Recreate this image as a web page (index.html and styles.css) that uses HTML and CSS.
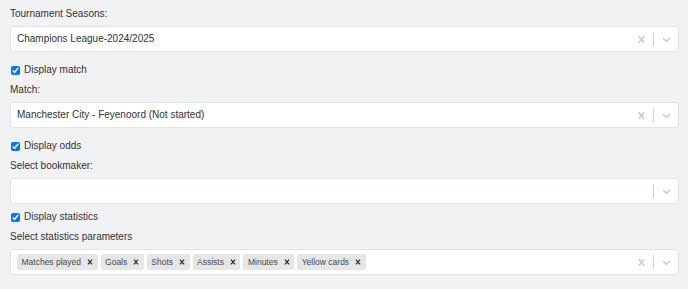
FILE: index.html
```html
<!DOCTYPE html>
<html lang="en">
<head>
    <meta charset="UTF-8">
    <meta name="viewport" content="width=device-width, initial-scale=1.0">
    <title>Widget settings</title>
    <link rel="stylesheet" href="styles.css">
</head>
<body>
    <div class="form">
        <div class="field-label first">Tournament Seasons:</div>
        <div class="select">
            <div class="value">Champions League-2024/2025</div>
            <div class="indicators">
                <span class="indicator"><svg viewBox="0 0 20 20"><path d="M14.348 14.849c-0.469 0.469-1.229 0.469-1.697 0l-2.651-3.030-2.651 3.029c-0.469 0.469-1.229 0.469-1.697 0-0.469-0.469-0.469-1.229 0-1.697l2.758-3.150-2.759-3.152c-0.469-0.469-0.469-1.228 0-1.697s1.228-0.469 1.697 0l2.652 3.031 2.651-3.031c0.469-0.469 1.228-0.469 1.697 0s0.469 1.229 0 1.697l-2.758 3.152 2.758 3.150c0.469 0.469 0.469 1.229 0 1.698z"/></svg></span>
                <span class="separator"></span>
                <span class="indicator"><svg viewBox="0 0 20 20"><path d="M4.516 7.548c0.436-0.446 1.043-0.481 1.576 0l3.908 3.747 3.908-3.747c0.533-0.481 1.141-0.446 1.574 0 0.436 0.445 0.408 1.197 0 1.615-0.406 0.418-4.695 4.502-4.695 4.502-0.217 0.223-0.502 0.335-0.787 0.335s-0.57-0.112-0.789-0.335c0 0-4.287-4.084-4.695-4.502s-0.436-1.170 0-1.615z"/></svg></span>
            </div>
        </div>

        <label class="check-row"><input type="checkbox" checked> Display match</label>
        <div class="field-label">Match:</div>
        <div class="select">
            <div class="value">Manchester City - Feyenoord (Not started)</div>
            <div class="indicators">
                <span class="indicator"><svg viewBox="0 0 20 20"><path d="M14.348 14.849c-0.469 0.469-1.229 0.469-1.697 0l-2.651-3.030-2.651 3.029c-0.469 0.469-1.229 0.469-1.697 0-0.469-0.469-0.469-1.229 0-1.697l2.758-3.150-2.759-3.152c-0.469-0.469-0.469-1.228 0-1.697s1.228-0.469 1.697 0l2.652 3.031 2.651-3.031c0.469-0.469 1.228-0.469 1.697 0s0.469 1.229 0 1.697l-2.758 3.152 2.758 3.150c0.469 0.469 0.469 1.229 0 1.698z"/></svg></span>
                <span class="separator"></span>
                <span class="indicator"><svg viewBox="0 0 20 20"><path d="M4.516 7.548c0.436-0.446 1.043-0.481 1.576 0l3.908 3.747 3.908-3.747c0.533-0.481 1.141-0.446 1.574 0 0.436 0.445 0.408 1.197 0 1.615-0.406 0.418-4.695 4.502-4.695 4.502-0.217 0.223-0.502 0.335-0.787 0.335s-0.57-0.112-0.789-0.335c0 0-4.287-4.084-4.695-4.502s-0.436-1.170 0-1.615z"/></svg></span>
            </div>
        </div>

        <label class="check-row"><input type="checkbox" checked> Display odds</label>
        <div class="field-label">Select bookmaker:</div>
        <div class="select">
            <div class="value"></div>
            <div class="indicators">
                <span class="separator"></span>
                <span class="indicator"><svg viewBox="0 0 20 20"><path d="M4.516 7.548c0.436-0.446 1.043-0.481 1.576 0l3.908 3.747 3.908-3.747c0.533-0.481 1.141-0.446 1.574 0 0.436 0.445 0.408 1.197 0 1.615-0.406 0.418-4.695 4.502-4.695 4.502-0.217 0.223-0.502 0.335-0.787 0.335s-0.57-0.112-0.789-0.335c0 0-4.287-4.084-4.695-4.502s-0.436-1.170 0-1.615z"/></svg></span>
            </div>
        </div>

        <label class="check-row tight"><input type="checkbox" checked> Display statistics</label>
        <div class="field-label">Select statistics parameters</div>
        <div class="select">
            <div class="value tags">
                <span class="tag"><span class="tag-label">Matches played</span><span class="tag-remove"><svg viewBox="0 0 20 20"><path d="M14.348 14.849c-0.469 0.469-1.229 0.469-1.697 0l-2.651-3.030-2.651 3.029c-0.469 0.469-1.229 0.469-1.697 0-0.469-0.469-0.469-1.229 0-1.697l2.758-3.150-2.759-3.152c-0.469-0.469-0.469-1.228 0-1.697s1.228-0.469 1.697 0l2.652 3.031 2.651-3.031c0.469-0.469 1.228-0.469 1.697 0s0.469 1.229 0 1.697l-2.758 3.152 2.758 3.150c0.469 0.469 0.469 1.229 0 1.698z"/></svg></span></span>
                <span class="tag"><span class="tag-label">Goals</span><span class="tag-remove"><svg viewBox="0 0 20 20"><path d="M14.348 14.849c-0.469 0.469-1.229 0.469-1.697 0l-2.651-3.030-2.651 3.029c-0.469 0.469-1.229 0.469-1.697 0-0.469-0.469-0.469-1.229 0-1.697l2.758-3.150-2.759-3.152c-0.469-0.469-0.469-1.228 0-1.697s1.228-0.469 1.697 0l2.652 3.031 2.651-3.031c0.469-0.469 1.228-0.469 1.697 0s0.469 1.229 0 1.697l-2.758 3.152 2.758 3.150c0.469 0.469 0.469 1.229 0 1.698z"/></svg></span></span>
                <span class="tag"><span class="tag-label">Shots</span><span class="tag-remove"><svg viewBox="0 0 20 20"><path d="M14.348 14.849c-0.469 0.469-1.229 0.469-1.697 0l-2.651-3.030-2.651 3.029c-0.469 0.469-1.229 0.469-1.697 0-0.469-0.469-0.469-1.229 0-1.697l2.758-3.150-2.759-3.152c-0.469-0.469-0.469-1.228 0-1.697s1.228-0.469 1.697 0l2.652 3.031 2.651-3.031c0.469-0.469 1.228-0.469 1.697 0s0.469 1.229 0 1.697l-2.758 3.152 2.758 3.150c0.469 0.469 0.469 1.229 0 1.698z"/></svg></span></span>
                <span class="tag"><span class="tag-label">Assists</span><span class="tag-remove"><svg viewBox="0 0 20 20"><path d="M14.348 14.849c-0.469 0.469-1.229 0.469-1.697 0l-2.651-3.030-2.651 3.029c-0.469 0.469-1.229 0.469-1.697 0-0.469-0.469-0.469-1.229 0-1.697l2.758-3.150-2.759-3.152c-0.469-0.469-0.469-1.228 0-1.697s1.228-0.469 1.697 0l2.652 3.031 2.651-3.031c0.469-0.469 1.228-0.469 1.697 0s0.469 1.229 0 1.697l-2.758 3.152 2.758 3.150c0.469 0.469 0.469 1.229 0 1.698z"/></svg></span></span>
                <span class="tag"><span class="tag-label">Minutes</span><span class="tag-remove"><svg viewBox="0 0 20 20"><path d="M14.348 14.849c-0.469 0.469-1.229 0.469-1.697 0l-2.651-3.030-2.651 3.029c-0.469 0.469-1.229 0.469-1.697 0-0.469-0.469-0.469-1.229 0-1.697l2.758-3.150-2.759-3.152c-0.469-0.469-0.469-1.228 0-1.697s1.228-0.469 1.697 0l2.652 3.031 2.651-3.031c0.469-0.469 1.228-0.469 1.697 0s0.469 1.229 0 1.697l-2.758 3.152 2.758 3.150c0.469 0.469 0.469 1.229 0 1.698z"/></svg></span></span>
                <span class="tag"><span class="tag-label">Yellow cards</span><span class="tag-remove"><svg viewBox="0 0 20 20"><path d="M14.348 14.849c-0.469 0.469-1.229 0.469-1.697 0l-2.651-3.030-2.651 3.029c-0.469 0.469-1.229 0.469-1.697 0-0.469-0.469-0.469-1.229 0-1.697l2.758-3.150-2.759-3.152c-0.469-0.469-0.469-1.228 0-1.697s1.228-0.469 1.697 0l2.652 3.031 2.651-3.031c0.469-0.469 1.228-0.469 1.697 0s0.469 1.229 0 1.697l-2.758 3.152 2.758 3.150c0.469 0.469 0.469 1.229 0 1.698z"/></svg></span></span>
            </div>
            <div class="indicators">
                <span class="indicator"><svg viewBox="0 0 20 20"><path d="M14.348 14.849c-0.469 0.469-1.229 0.469-1.697 0l-2.651-3.030-2.651 3.029c-0.469 0.469-1.229 0.469-1.697 0-0.469-0.469-0.469-1.229 0-1.697l2.758-3.150-2.759-3.152c-0.469-0.469-0.469-1.228 0-1.697s1.228-0.469 1.697 0l2.652 3.031 2.651-3.031c0.469-0.469 1.228-0.469 1.697 0s0.469 1.229 0 1.697l-2.758 3.152 2.758 3.150c0.469 0.469 0.469 1.229 0 1.698z"/></svg></span>
                <span class="separator"></span>
                <span class="indicator"><svg viewBox="0 0 20 20"><path d="M4.516 7.548c0.436-0.446 1.043-0.481 1.576 0l3.908 3.747 3.908-3.747c0.533-0.481 1.141-0.446 1.574 0 0.436 0.445 0.408 1.197 0 1.615-0.406 0.418-4.695 4.502-4.695 4.502-0.217 0.223-0.502 0.335-0.787 0.335s-0.57-0.112-0.789-0.335c0 0-4.287-4.084-4.695-4.502s-0.436-1.170 0-1.615z"/></svg></span>
            </div>
        </div>
    </div>
</body>
</html>
```

FILE: styles.css
```css
body {
    margin: 0;
    background-color: #f1f2f4;
    font-family: 'Liberation Sans', Arial, sans-serif;
    font-size: 10px;
    line-height: 14px;
    color: #333333;
}

.form {
    display: flex;
    flex-direction: column;
    padding: 0 9px 0 10px;
}

.field-label {
    margin-top: 6px;
    margin-bottom: 5px;
}

.field-label.first {
    margin-top: 7px;
}

.select {
    display: flex;
    align-items: center;
    height: 26px;
    box-sizing: border-box;
    background-color: white;
    border: 1px solid #e2e3e6;
    border-radius: 3px;
}

.value {
    flex: 1;
    padding-left: 6px;
}

.tags {
    display: flex;
    gap: 3px;
}

.tag {
    display: flex;
    align-items: center;
    height: 16px;
    background-color: #e6e6e6;
    border-radius: 2px;
    color: #4a4a4a;
}

.tag-label {
    font-size: 8.5px;
    padding: 0 2px 0 4.5px;
}

.tag-remove {
    display: flex;
    align-items: center;
    padding: 0 2.5px 0 2px;
}

.tag-remove svg {
    width: 10px;
    height: 10px;
    fill: #333333;
}

.indicators {
    display: flex;
    align-items: center;
    align-self: stretch;
}

.indicator {
    display: flex;
    align-items: center;
    padding: 0 5.5px;
}

.indicator svg {
    width: 13px;
    height: 13px;
    fill: #cccccc;
}

.separator {
    width: 1px;
    height: 14px;
    background-color: #d5d6d8;
}

.check-row {
    display: flex;
    align-items: center;
    margin-top: 11px;
}

.check-row.tight {
    margin-top: 6px;
}

.check-row input {
    width: 9px;
    height: 9px;
    margin: 0 4px 0 1px;
}
```
